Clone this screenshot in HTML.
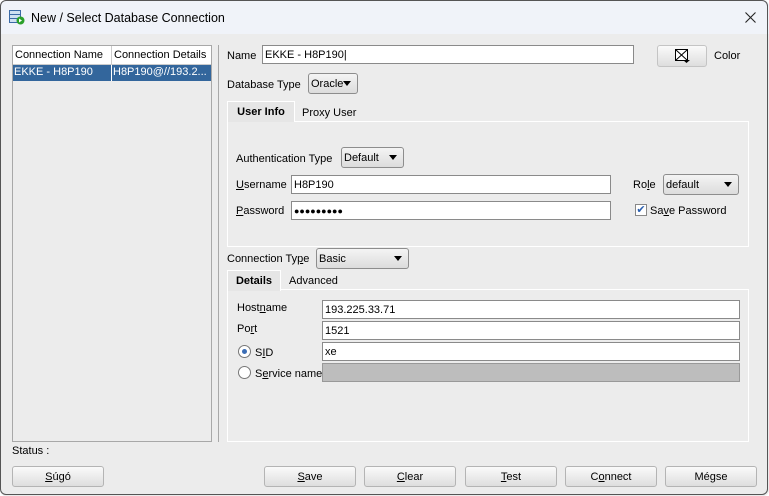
<!DOCTYPE html><html><head><style>
*{box-sizing:border-box;margin:0;padding:0}
body{width:769px;height:496px;background:#fff;font:11px "Liberation Sans",sans-serif;color:#000;position:relative;overflow:hidden}
.a{position:absolute}
.l{position:absolute;margin-top:2px}
.win{left:0;top:0;width:769px;height:496px;background:#ececec;overflow:hidden;border-radius:6px}
.frame{left:0;top:0;width:768px;height:495px;border:1px solid #555;border-radius:6px;pointer-events:none}
.title{left:0;top:0;width:769px;height:34px;background:#f0f3f9}
.in{position:absolute;background:#fff;border:1px solid #8a8a8a;height:19px;padding-left:2px;line-height:18px}
.sel{position:absolute;border:1px solid #8d8d8d;border-radius:3px;background:linear-gradient(#f4f4f4,#dcdcdc);height:21px;line-height:20px;padding-left:2px}
.sel:after{content:"";position:absolute;right:6px;top:7px;border:4px solid transparent;border-top:5px solid #000}
.btn{position:absolute;top:466px;height:21px;width:92px;border:1px solid #b4b4b4;border-radius:3px;background:linear-gradient(#fafafa,#dedede);text-align:center;line-height:20px}
.panel{position:absolute;border:1px solid #fff}
.tab{position:absolute;border:1px solid #fff;border-bottom:none;background:#e6e6e6;font-weight:bold;text-align:center;line-height:21px;height:21px}
u{text-decoration:underline}
</style></head><body>
<div class="a win">
<div class="a title"></div>
<svg class="a" style="left:9px;top:10px" width="16" height="15" viewBox="0 0 16 15"><rect x="0.5" y="0.5" width="11" height="12" fill="#cfe0f2" stroke="#3a6aa6"/><line x1="1" y1="4.5" x2="11" y2="4.5" stroke="#3a6aa6"/><line x1="1" y1="8.5" x2="11" y2="8.5" stroke="#3a6aa6"/><circle cx="11.5" cy="10.5" r="4" fill="#2aa02a"/><path d="M10 8.5l3 2-3 2z" fill="#fff"/></svg>
<div class="a" style="left:31px;top:11px;font-size:12.5px">New / Select Database Connection</div>
<svg class="a" style="left:745px;top:12px" width="11" height="11"><path d="M0.5 0.5l10 10M10.5 0.5l-10 10" stroke="#222" stroke-width="1.1"/></svg>

<div class="a" style="left:12px;top:45px;width:200px;height:397px;border:1px solid #a8a8a8;background:#ececec">
<div class="a" style="left:0;top:0;width:198px;height:19px;background:#fff;border-bottom:1px solid #ccc"></div>
<div class="a" style="left:98px;top:0;width:1px;height:35px;background:#ccc"></div>
<div class="a" style="left:2px;top:3px">Connection Name</div>
<div class="a" style="left:101px;top:3px">Connection Details</div>
<div class="a" style="left:0;top:19px;width:198px;height:16px;background:#33669c"></div>
<div class="a" style="left:98px;top:19px;width:1px;height:16px;background:#fff"></div>
<div class="a" style="left:1px;top:20px;color:#fff">EKKE - H8P190</div>
<div class="a" style="left:100px;top:20px;color:#fff">H8P190@//193.2...</div>
</div>
<div class="a" style="left:218px;top:45px;width:1px;height:397px;background:#a8a8a8"></div>

<div class="l" style="left:227px;top:48px">Name</div>
<div class="in" style="left:262px;top:45px;width:372px">EKKE - H8P190|</div>
<div class="a" style="left:657px;top:45px;width:50px;height:22px;border:1px solid #c4c4c4;border-radius:3px;background:linear-gradient(#fafafa,#dedede)"><svg class="a" style="left:16px;top:2px" width="18" height="16"><rect x="1.5" y="1.5" width="12" height="11" fill="#fff" stroke="#000"/><path d="M1.5 1.5l12 11M13.5 1.5l-12 11" stroke="#000"/><path d="M9 12h7l-3.5 3z" fill="#000"/></svg></div>
<div class="l" style="left:714px;top:48px">Color</div>

<div class="l" style="left:227px;top:77px">Database Type</div>
<div class="sel" style="left:308px;top:73px;width:50px">Oracle</div>

<div class="panel" style="left:227px;top:121px;width:522px;height:126px"></div>
<div class="tab" style="left:227px;top:101px;width:68px">User Info</div>
<div class="l" style="left:302px;top:105px">Proxy User</div>

<div class="l" style="left:236px;top:151px">Authentication Type</div>
<div class="sel" style="left:341px;top:147px;width:63px">Default</div>
<div class="l" style="left:236px;top:177px"><u>U</u>sername</div>
<div class="in" style="left:291px;top:175px;width:320px">H8P190</div>
<div class="l" style="left:633px;top:177px">Ro<u>l</u>e</div>
<div class="sel" style="left:663px;top:174px;width:76px">default</div>
<div class="l" style="left:236px;top:203px"><u>P</u>assword</div>
<div class="in" style="left:291px;top:201px;width:320px;font-size:9px">●●●●●●●●●</div>
<div class="a" style="left:635px;top:204px;width:12px;height:12px;border:1px solid #888;background:#fff;color:#2a5fb0;font-size:11px;line-height:10px;text-align:center">✔</div>
<div class="l" style="left:650px;top:203px">Sa<u>v</u>e Password</div>

<div class="l" style="left:227px;top:251px">Connection Ty<u>p</u>e</div>
<div class="sel" style="left:316px;top:248px;width:93px">Basic</div>

<div class="panel" style="left:227px;top:289px;width:522px;height:153px"></div>
<div class="tab" style="left:227px;top:270px;width:54px">Details</div>
<div class="l" style="left:289px;top:273px">Advanced</div>

<div class="l" style="left:237px;top:300px">Host<u>n</u>ame</div>
<div class="in" style="left:322px;top:300px;width:418px">193.225.33.71</div>
<div class="l" style="left:237px;top:321px">Po<u>r</u>t</div>
<div class="in" style="left:322px;top:321px;width:418px">1521</div>
<div class="a" style="left:238px;top:345px;width:13px;height:13px;border:1px solid #777;border-radius:50%;background:#fff"><div class="a" style="left:3px;top:3px;width:5px;height:5px;border-radius:50%;background:#3b6db5"></div></div>
<div class="l" style="left:255px;top:345px">S<u>I</u>D</div>
<div class="in" style="left:322px;top:342px;width:418px">xe</div>
<div class="a" style="left:238px;top:366px;width:13px;height:13px;border:1px solid #777;border-radius:50%;background:#fff"></div>
<div class="l" style="left:255px;top:366px">S<u>e</u>rvice name</div>
<div class="in" style="left:322px;top:363px;width:418px;background:#bdbdbd;border-color:#999"></div>

<div class="l" style="left:12px;top:443px">Status :</div>
<div class="btn" style="left:12px"><u>S</u>úgó</div>
<div class="btn" style="left:264px"><u>S</u>ave</div>
<div class="btn" style="left:364px"><u>C</u>lear</div>
<div class="btn" style="left:465px"><u>T</u>est</div>
<div class="btn" style="left:565px">C<u>o</u>nnect</div>
<div class="btn" style="left:665px">Mégse</div>
</div>
<div class="a frame"></div>
</body></html>
